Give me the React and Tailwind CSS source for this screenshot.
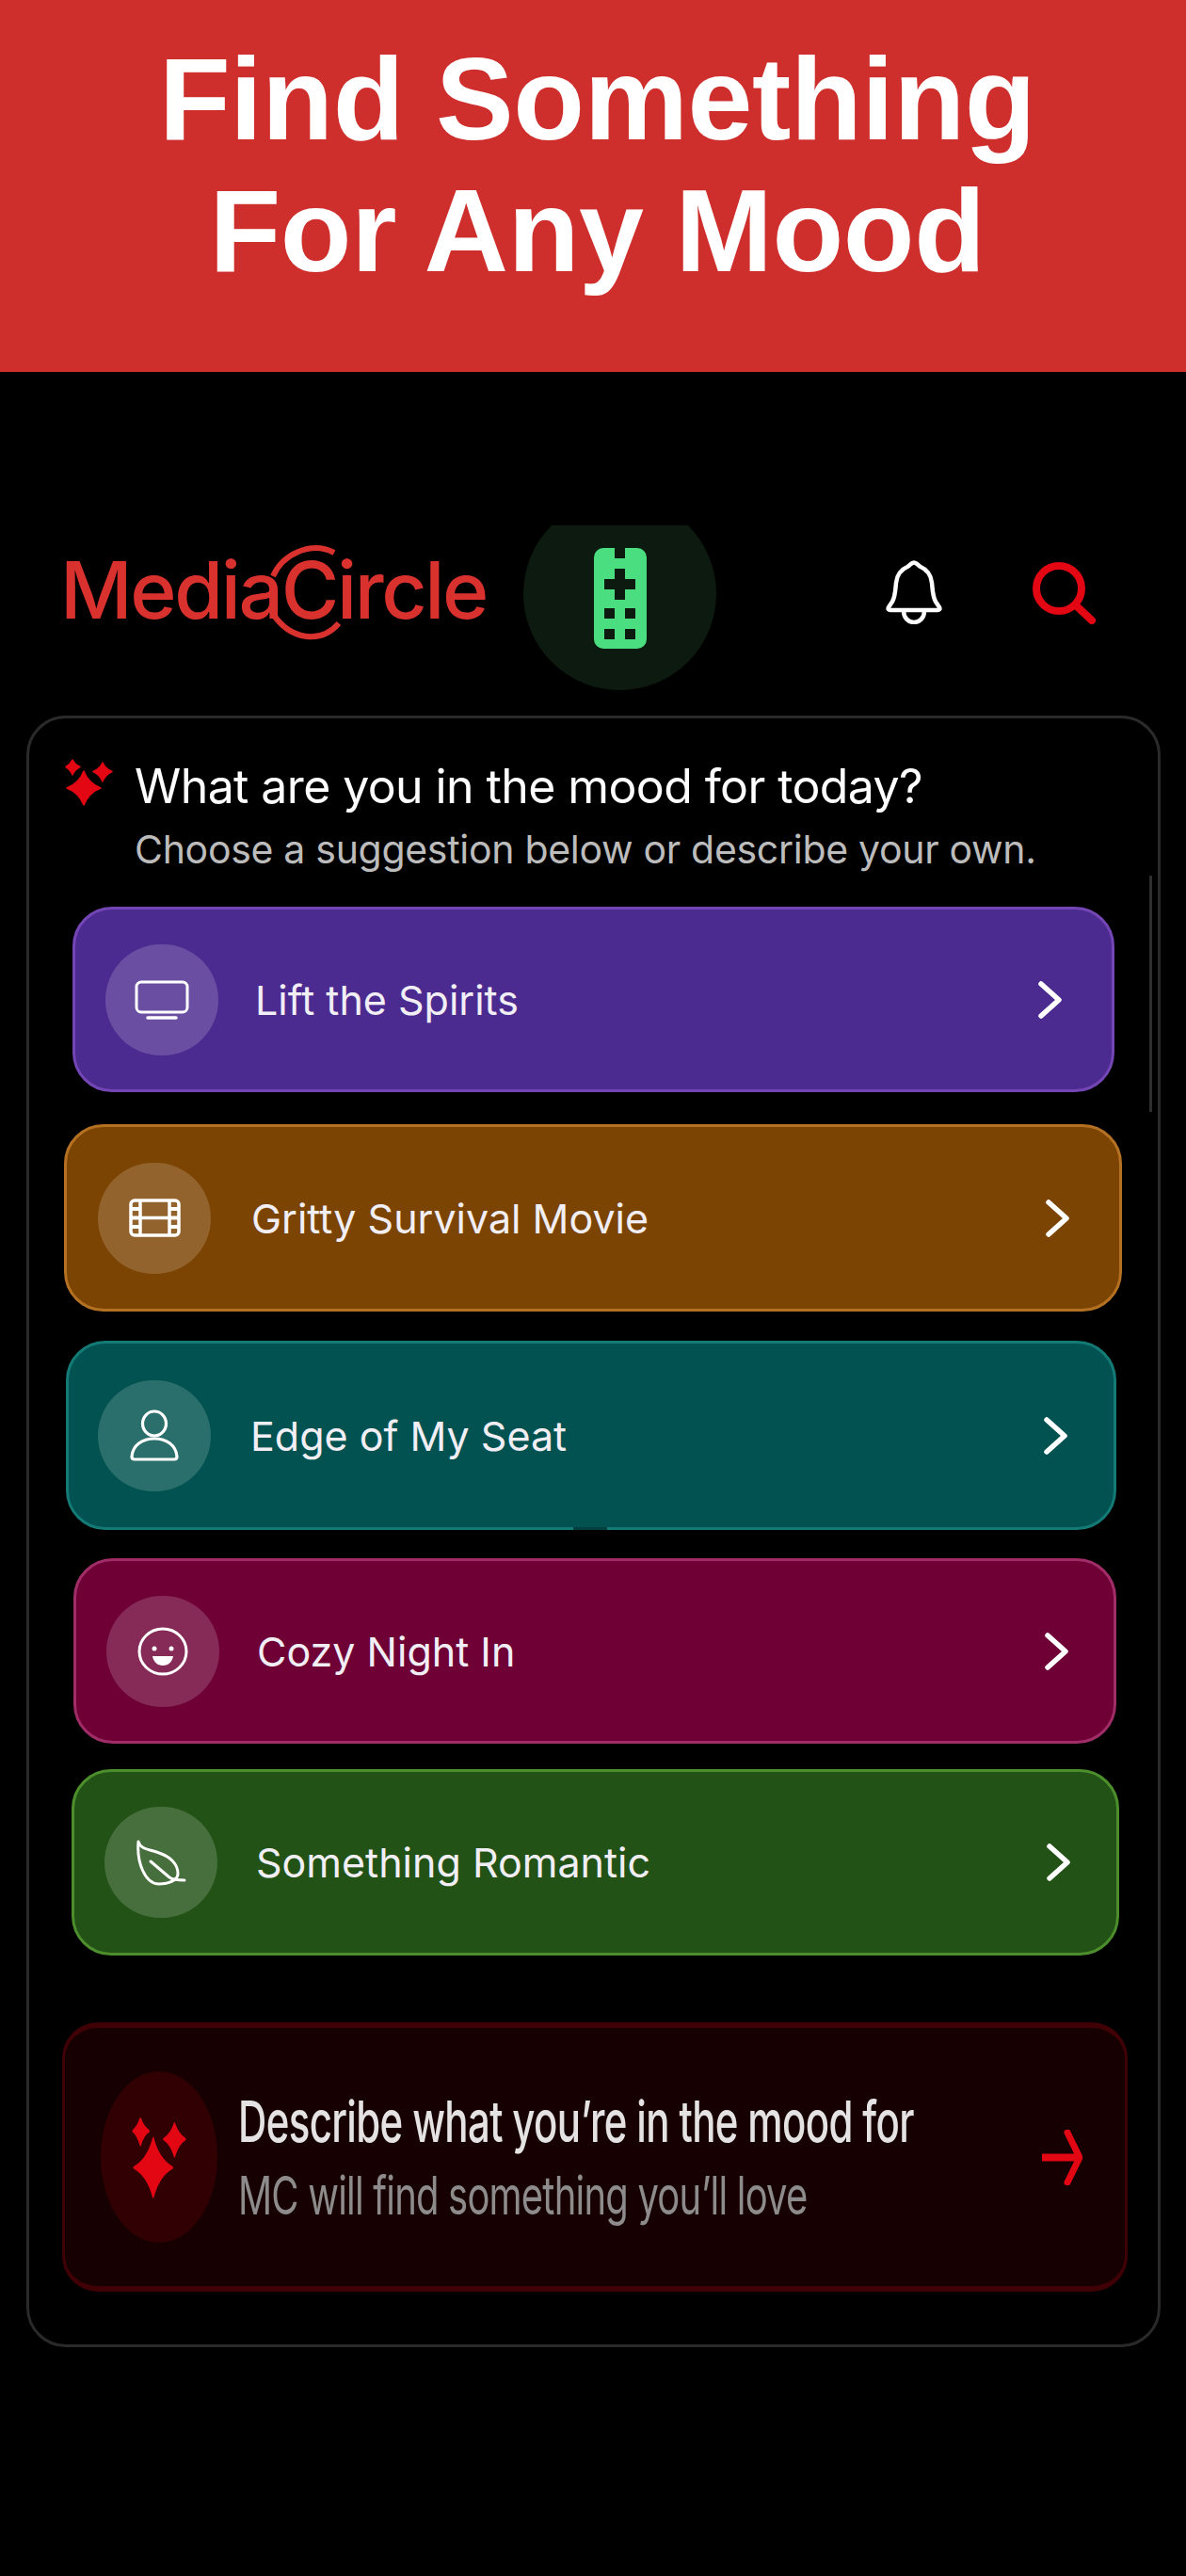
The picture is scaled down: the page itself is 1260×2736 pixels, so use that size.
const moods = [
  { label: 'Lift the Spirits', icon: 'tv', box: 'mt-[36px] ml-[46px] w-[1107px] h-[197px] bg-[#4c2b90] border-[#7446b5]', circle: 'ml-[32px]', text: 'ml-[39px]', chevron: 'mr-[52px]' },
  { label: 'Gritty Survival Movie', icon: 'film', box: 'mt-[34px] ml-[37px] w-[1124px] h-[199px] bg-[#7c4403] border-[#b57122]', circle: 'ml-[33px]', text: 'ml-[43px]', chevron: 'mr-[52px]' },
  { label: 'Edge of My Seat', icon: 'user', box: 'mt-[31px] ml-[39px] w-[1116px] h-[201px] bg-[#015250] border-[#147a76]', circle: 'ml-[31px]', text: 'ml-[42px]', chevron: 'mr-[48px]' },
  { label: 'Cozy Night In', icon: 'smile', box: 'mt-[30px] ml-[47px] w-[1108px] h-[197px] bg-[#6e0035] border-[#a02c68]', circle: 'ml-[32px]', text: 'ml-[40px]', chevron: 'mr-[47px]' },
  { label: 'Something Romantic', icon: 'leaf', box: 'mt-[27px] ml-[45px] w-[1113px] h-[198px] bg-[#225216] border-[#4c8e2c]', circle: 'ml-[32px]', text: 'ml-[41px]', chevron: 'mr-[48px]' },
]

const MoodIcon = ({ name }) => {
  if (name === 'tv') {
    return (
      <svg width="58" height="42" viewBox="0 0 58 42" fill="none" stroke="white" strokeWidth="3" strokeLinecap="round" strokeLinejoin="round">
        <rect x="2" y="2" width="54" height="32" rx="5" />
        <path d="M14 40h30" strokeWidth="3.500" />
      </svg>
    )
  }
  if (name === 'film') {
    return (
      <svg width="55" height="41" viewBox="0 0 55 41" fill="none" stroke="white" strokeWidth="3.500" strokeLinejoin="round">
        <rect x="2" y="2" width="51" height="37" rx="4" />
        <path d="M12 2v37M43 2v37M12 20.500h31" />
        <path d="M2 11h10M2 20.500h10M2 30h10M43 11h10M43 20.500h10M43 30h10" strokeWidth="4" />
      </svg>
    )
  }
  if (name === 'user') {
    return (
      <svg width="52" height="55" viewBox="0 0 52 55" fill="none" stroke="white" strokeWidth="3.200" strokeLinejoin="round">
        <ellipse cx="26" cy="15" rx="12.500" ry="13" />
        <path d="M5 53h42c2 0 3-1 3-3-1-12-11-19-24-19S3 38 2 50c0 2 1 3 3 3z" />
      </svg>
    )
  }
  if (name === 'smile') {
    return (
      <svg width="54" height="52" viewBox="0 0 54 52" fill="none" stroke="white" strokeWidth="3">
        <ellipse cx="27" cy="26" rx="25" ry="24" />
        <circle cx="18" cy="23" r="2.500" fill="white" stroke="none" />
        <circle cx="36" cy="23" r="2.500" fill="white" stroke="none" />
        <path d="M16 31h22c-1 6-5 10-11 10s-10-4-11-10z" fill="white" stroke="none" />
      </svg>
    )
  }
  return (
    <svg width="54" height="49" viewBox="0 0 54 49" fill="none" stroke="white" strokeWidth="3" strokeLinecap="round" strokeLinejoin="round">
      <path d="M3 2c2 8 11 8 22 12 12 4 20 12 20 22 0 7-10 11-20 11C10 47 1 24 3 2z" />
      <path d="M16 23l20 17c4 3 10 3 16 3" />
    </svg>
  )
}

// three four pointed stars, stretched to whatever box it gets
const Sparkles = ({ width, height }) => (
  <svg width={width} height={height} viewBox="0 0 53 51" preserveAspectRatio="none" fill="#e30613" stroke="#e30613" strokeWidth="1.500" strokeLinejoin="round">
    <path d="M21 14Q26 27 39 32 26 37 21 50 16 37 3 32 16 27 21 14z" />
    <path d="M9 2Q11.500 7 17 9.500 11.500 12 9 18 6.500 12 2 9.500 6.500 7 9 2z" />
    <path d="M41 5Q44 11.500 51 14.500 44 17.500 41 25 38 17.500 31 14.500 38 11.500 41 5z" />
  </svg>
)

const App = () => {
  return (
    <div className="w-[1260px] h-[2736px] bg-black overflow-hidden font-['Inter',sans-serif]">
      <div className="h-[395px] bg-[#ce2f2c] flex flex-col items-center pt-[35px] pl-[9px] font-['Liberation_Sans',sans-serif] font-bold text-white text-[124px] tracking-[-0.4px] leading-[140px]">
        <div>Find Something</div>
        <div>For Any Mood</div>
      </div>

      <div className="mt-[163px] h-[175px] overflow-hidden flex">
        <div className="relative ml-[68px] mt-[19px] w-[447px] h-[110px]">
          <span className="block ml-[-4px] text-[#d9322e] text-[84px] leading-[100px] tracking-[-2.4px] font-[550] whitespace-nowrap">MediaCircle</span>
          <svg className="absolute left-0 top-0" width="447" height="110" viewBox="0 0 447 110" fill="none" stroke="#d9322e" strokeWidth="6">
            <path d="M222 35C232 12 262 -3 287 10" />
            <path d="M222 75C240 102 272 108 292 85" />
          </svg>
        </div>
        <div className="ml-[41px] mt-[-30px] w-[205px] h-[205px] rounded-full bg-[#0c1a10] flex items-center justify-center shrink-0">
          <svg className="mt-[10px]" width="56" height="107" viewBox="0 0 56 107" fill="#4ade80">
            <path fillRule="evenodd" d="M10 0h12v11h11V0h13a10 10 0 0 1 10 10v87a10 10 0 0 1-10 10H10A10 10 0 0 1 0 97V10A10 10 0 0 1 10 0zM22 22v11H11v11h11v11h11V44h11V33H33V22zM11 64v11h11V64zM33 64v11h11V64zM11 86v11h11V86zM33 86v11h11V86z" />
          </svg>
        </div>
        <svg className="ml-[180px] mt-[37px] shrink-0" width="60" height="68" viewBox="0 0 60 68" fill="none" stroke="white" strokeWidth="4.500" strokeLinejoin="round">
          <path d="M30 2.500c3 0 4 3 7 4.500 7 3 11 8 12 17 1 10 1 15 4 20l4 6c1 2 0 3-2 3H5c-2 0-3-1-2-3l4-6c3-5 3-10 4-20 1-9 5-14 12-17 3-1.500 4-4.500 7-4.500z" />
          <path d="M19 54c0 7 5 12 11 12s11-5 11-12" />
        </svg>
        <svg className="ml-[96px] mt-[39px] shrink-0" width="68" height="66" viewBox="0 0 68 66" fill="none" stroke="#e30613" strokeWidth="8" strokeLinecap="round">
          <circle cx="28" cy="28" r="24" />
          <path d="M46 46l17 16" />
        </svg>
      </div>

      <div className="relative mt-[27px] ml-[28px] w-[1205px] h-[1733px] border-[3px] border-[#2a2a2a] rounded-[42px]">
        <div className="absolute right-[6px] top-[167px] w-[3px] h-[251px] bg-[#2e2e2e]" />

        <div className="flex ml-[37px] mt-[42px]">
          <Sparkles width={53} height={51} />
          <div className="ml-[22px]">
            <div className="text-white text-[50px] leading-[60px] tracking-[-0.6px] whitespace-nowrap">What are you in the mood for today?</div>
            <div className="mt-[12px] text-[#bcbcbc] text-[41px] leading-[50px] tracking-[-0.3px] whitespace-nowrap">Choose a suggestion below or describe your own.</div>
          </div>
        </div>

        {moods.map((mood) => (
          <div key={mood.label} className={`relative flex items-center border-[3px] rounded-[42px] ${mood.box}`}>
            <div className={`w-[120px] h-[118px] rounded-full bg-white/[0.17] flex items-center justify-center shrink-0 ${mood.circle}`}>
              <MoodIcon name={mood.icon} />
            </div>
            <div className={`text-[43px] leading-[50px] text-[#f1eef5] whitespace-nowrap ${mood.text}`}>{mood.label}</div>
            <svg className={`ml-auto shrink-0 ${mood.chevron}`} width="27" height="42" viewBox="0 0 27 42" fill="none" stroke="white" strokeWidth="5.500" strokeLinecap="round" strokeLinejoin="round">
              <path d="M4 4l19 17L4 38" />
            </svg>
            {mood.icon === 'user' && <div className="absolute bottom-[-3px] left-[536px] w-[36px] h-[3px] bg-[#033f3e]" />}
          </div>
        ))}

        <div className="mt-[71px] ml-[35px] w-[1132px] h-[286px] flex items-center bg-[#170002] border-x-[3px] border-y-[6px] border-[#3f0006] rounded-[38px]">
          <div className="ml-[38px] w-[124px] h-[182px] rounded-[50%] bg-[#300003] flex items-center justify-center shrink-0">
            <Sparkles width={60} height={88} />
          </div>
          <div className="ml-[22px] blur-[0.6px]">
            <div className="text-[#e4e2e2] text-[42px] leading-[50px] font-medium tracking-[-0.65px] scale-y-[1.45] origin-left whitespace-nowrap">Describe what you’re in the mood for</div>
            <div className="mt-[32px] text-[#8d8b8b] text-[40px] leading-[44px] tracking-[-0.8px] scale-y-[1.4] origin-left whitespace-nowrap">MC will find something you’ll love</div>
          </div>
          <svg className="ml-auto mr-[45px] shrink-0" width="43" height="59" viewBox="0 0 43 59" fill="none" stroke="#e30613" strokeLinejoin="round">
            <path d="M0 29.500h38" strokeWidth="8" />
            <path d="M27 3l13 26.500L27 56" strokeWidth="7" strokeLinecap="round" />
          </svg>
        </div>
      </div>
    </div>
  )
}

export default App
